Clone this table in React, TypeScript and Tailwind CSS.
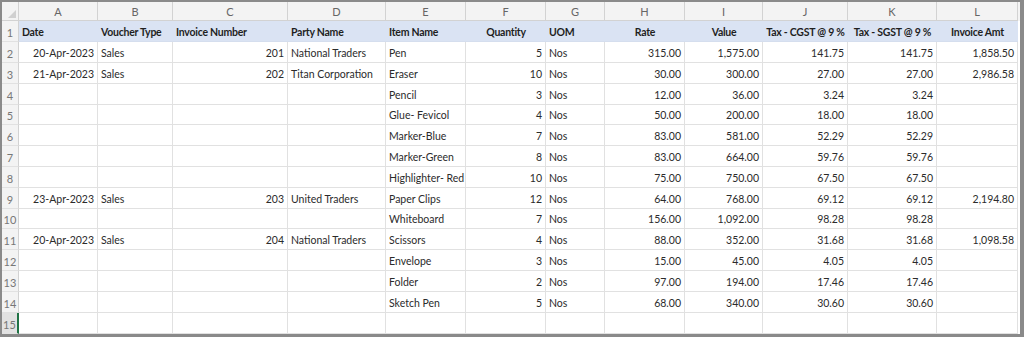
import React from 'react'

type Align = 'l' | 'r' | 'c'

const letters = ['A', 'B', 'C', 'D', 'E', 'F', 'G', 'H', 'I', 'J', 'K', 'L']

const headers: { label: string; align: Align }[] = [
  { label: 'Date', align: 'l' },
  { label: 'Voucher Type', align: 'l' },
  { label: 'Invoice Number', align: 'l' },
  { label: 'Party Name', align: 'l' },
  { label: 'Item Name', align: 'l' },
  { label: 'Quantity', align: 'c' },
  { label: 'UOM', align: 'l' },
  { label: 'Rate', align: 'c' },
  { label: 'Value', align: 'c' },
  { label: 'Tax - CGST @ 9 %', align: 'c' },
  { label: 'Tax - SGST @ 9 %', align: 'c' },
  { label: 'Invoice Amt', align: 'c' },
]

// alignment of data per column
const dataAlign: Align[] = ['r', 'l', 'r', 'l', 'l', 'r', 'l', 'r', 'r', 'r', 'r', 'r']

const rows: string[][] = [
  ['20-Apr-2023', 'Sales', '201', 'National Traders', 'Pen', '5', 'Nos', '315.00', '1,575.00', '141.75', '141.75', '1,858.50'],
  ['21-Apr-2023', 'Sales', '202', 'Titan Corporation', 'Eraser', '10', 'Nos', '30.00', '300.00', '27.00', '27.00', '2,986.58'],
  ['', '', '', '', 'Pencil', '3', 'Nos', '12.00', '36.00', '3.24', '3.24', ''],
  ['', '', '', '', 'Glue- Fevicol', '4', 'Nos', '50.00', '200.00', '18.00', '18.00', ''],
  ['', '', '', '', 'Marker-Blue', '7', 'Nos', '83.00', '581.00', '52.29', '52.29', ''],
  ['', '', '', '', 'Marker-Green', '8', 'Nos', '83.00', '664.00', '59.76', '59.76', ''],
  ['', '', '', '', 'Highlighter- Red', '10', 'Nos', '75.00', '750.00', '67.50', '67.50', ''],
  ['23-Apr-2023', 'Sales', '203', 'United Traders', 'Paper Clips', '12', 'Nos', '64.00', '768.00', '69.12', '69.12', '2,194.80'],
  ['', '', '', '', 'Whiteboard', '7', 'Nos', '156.00', '1,092.00', '98.28', '98.28', ''],
  ['20-Apr-2023', 'Sales', '204', 'National Traders', 'Scissors', '4', 'Nos', '88.00', '352.00', '31.68', '31.68', '1,098.58'],
  ['', '', '', '', 'Envelope', '3', 'Nos', '15.00', '45.00', '4.05', '4.05', ''],
  ['', '', '', '', 'Folder', '2', 'Nos', '97.00', '194.00', '17.46', '17.46', ''],
  ['', '', '', '', 'Sketch Pen', '5', 'Nos', '68.00', '340.00', '30.60', '30.60', ''],
  ['', '', '', '', '', '', '', '', '', '', '', ''],
]

const gridCols =
  'grid grid-cols-[17px_79px_75px_115px_98px_80px_80px_59px_80px_78px_85px_89px_81px]'

const alignClass = (a: Align) =>
  a === 'r' ? 'justify-end' : a === 'c' ? 'justify-center' : 'justify-start'

function RowNum({ n, h, active }: { n: number; h: string; active?: boolean }) {
  return (
    <div
      className={`${h} flex items-center justify-center border-b border-[#e1e1e1] pt-[2px] text-[11px] text-[#777777] ${
        active ? 'border-r-2 border-r-[#217346] bg-[#e2e2e2]' : 'border-r border-r-[#d2d2d2] bg-[#f3f3f3]'
      }`}
    >
      {n}
    </div>
  )
}

export default function App() {
  return (
    <div className="h-[337px] w-[1024px] overflow-hidden border-b-[3px] border-l-2 border-r-4 border-t-2 border-[#8a8a8a] bg-white font-['Lato',sans-serif] text-[10.5px] leading-none">
      {/* Column letters */}
      <div className={`${gridCols} h-[19px] bg-[#f3f3f3]`}>
        <div className="relative border-b border-r border-[#d2d2d2]">
          <svg className="absolute bottom-[2px] right-[2px]" width="8" height="8" viewBox="0 0 8 8">
            <polygon points="8,0 8,8 0,8" fill="#d0d0d0" />
          </svg>
        </div>
        {letters.map((l) => (
          <div
            key={l}
            className="flex items-center justify-center border-b border-r border-[#d2d2d2] pt-[1px] text-[11px] text-[#666666]"
          >
            {l}
          </div>
        ))}
      </div>

      {/* Header row 1 */}
      <div className={`${gridCols} h-[21px]`}>
        <RowNum n={1} h="h-[21px]" />
        {headers.map((c) => (
          <div
            key={c.label}
            className={`flex items-center ${alignClass(c.align)} overflow-hidden whitespace-nowrap border-b border-[#d5deee] bg-[#dae3f3] px-[3px] pt-[2px] font-bold tracking-[-0.25px] text-[#1f1f1f]`}
          >
            {c.label}
          </div>
        ))}
      </div>

      {/* Data rows */}
      {rows.map((r, i) => {
        const h = i === 3 || i === 8 ? 'h-[20px]' : 'h-[21px]'
        return (
          <div key={i} className={`${gridCols} ${h}`}>
            <RowNum n={i + 2} h={h} active={i === rows.length - 1} />
            {r.map((v, j) => (
              <div
                key={j}
                className={`flex items-center ${alignClass(dataAlign[j])} overflow-visible whitespace-nowrap border-b border-r border-[#e1e1e1] px-[3px] pt-[2px] text-[#2b2b2b]`}
              >
                {v}
              </div>
            ))}
          </div>
        )
      })}
    </div>
  )
}
